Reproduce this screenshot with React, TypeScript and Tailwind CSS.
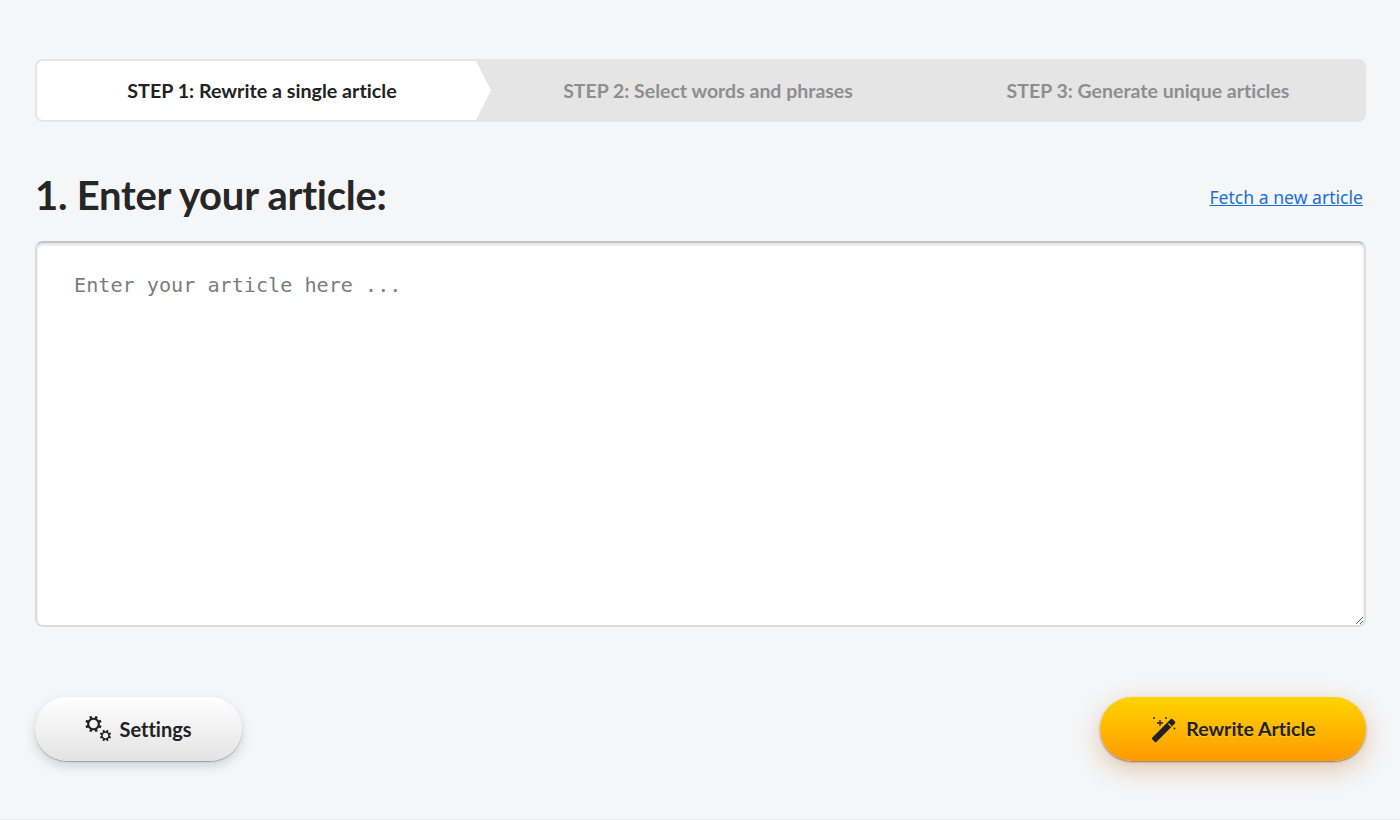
const display = "font-['Lato','Noto_Sans',sans-serif] [font-variant-ligatures:none]";

function Gear({ cx, cy, r, w }: { cx: number; cy: number; r: number; w: number }) {
  const teeth = [22.5, 67.5, 112.5, 157.5, 202.5, 247.5, 292.5, 337.5];
  return (
    <g>
      <circle cx={cx} cy={cy} r={r} fill="none" stroke="#222" strokeWidth={w} />
      {teeth.map((a) => (
        <line
          key={a}
          x1={cx + r * Math.cos((a * Math.PI) / 180)}
          y1={cy + r * Math.sin((a * Math.PI) / 180)}
          x2={cx + (r + w * 1.4) * Math.cos((a * Math.PI) / 180)}
          y2={cy + (r + w * 1.4) * Math.sin((a * Math.PI) / 180)}
          stroke="#222"
          strokeWidth={w * 1.2}
        />
      ))}
    </g>
  );
}

function CogsIcon() {
  return (
    <svg width="28" height="28" viewBox="0 0 28 28" className="shrink-0">
      <Gear cx={10.5} cy={9} r={5.3} w={2.1} />
      <Gear cx={22.5} cy={20.5} r={3.5} w={1.6} />
    </svg>
  );
}

function WandIcon() {
  return (
    <svg width="28" height="28" viewBox="0 0 28 28" className="shrink-0">
      <path d="M2.4 22.6 20.6 4.2a1.4 1.4 0 0 1 2 0l2.3 2.3a1.4 1.4 0 0 1 0 2L6.6 26.8a1.4 1.4 0 0 1-2 0l-2.2-2.2a1.4 1.4 0 0 1 0-2Z" fill="#222" />
      <path d="M18.4 8.6 21.3 11.5" stroke="#ffc400" strokeWidth="1.1" />
      <path d="M10 5v6M7 8h6" stroke="#222" strokeWidth="1.3" />
      <circle cx="4" cy="3" r="0.9" fill="#222" />
      <circle cx="16" cy="3" r="0.9" fill="#222" />
      <circle cx="24.5" cy="13.5" r="0.9" fill="#222" />
    </svg>
  );
}

export default function App() {
  return (
    <div className="h-[820px] w-[1400px] overflow-hidden border-b border-[#e9eaec] bg-[#f5f6f8] pl-[35px] pr-[34px] pt-[59px] font-['Noto_Sans',sans-serif]">
      <div className={`flex h-[63px] rounded-lg bg-[#e5e5e5] p-[2px] text-[19.5px] font-bold text-[#8e8e8e] ${display}`}>
        <div className="flex w-[454px] items-center justify-center rounded-l-md bg-white pr-[4px] text-[19.7px] text-[#222] [clip-path:polygon(0_0,439px_0,100%_50%,439px_100%,0_100%)]">
          STEP 1: Rewrite a single article
        </div>
        <div className="flex w-[434px] items-center justify-center">STEP 2: Select words and phrases</div>
        <div className="flex flex-1 items-center justify-center pl-[7px]">STEP 3: Generate unique articles</div>
      </div>

      <div className="mt-[46px] flex h-[53px] items-center justify-between">
        <h1 className={`text-[40px] font-bold leading-none tracking-[-0.25px] text-[#262626] ${display}`}>1. Enter your article:</h1>
        <a href="#" className="pr-[3px] pt-[6px] text-[17.6px] text-[#1a6fd6] underline">Fetch a new article</a>
      </div>

      <textarea
        placeholder="Enter your article here ..."
        className="mt-[20px] block h-[386px] w-full rounded-lg border-2 border-[#dcdcdc] border-t-[#c4c4c4] bg-white px-[37px] py-[27px] font-['DejaVu_Sans_Mono',monospace] text-[20.15px] text-[#333] shadow-[inset_0_2px_3px_rgba(0,0,0,0.12)] outline-none placeholder:text-[#7c7c7c]"
      />

      <div className="mt-[70px] flex items-start justify-between">
        <button className={`flex h-[64px] w-[207px] items-center justify-center gap-[8px] rounded-full bg-gradient-to-b from-white to-[#e3e3e3] pr-[2px] text-[20px] font-bold text-[#222] shadow-[0_1px_1px_rgba(0,0,0,0.28),0_5px_12px_rgba(0,0,0,0.15)] ${display}`}>
          <CogsIcon />
          Settings
        </button>
        <button className={`flex h-[64px] w-[266px] items-center justify-center gap-[8px] rounded-full bg-gradient-to-b from-[#ffd400] to-[#ff9a00] text-[19.5px] font-bold text-[#222] shadow-[0_1px_2px_rgba(70,50,60,0.6),0_8px_24px_rgba(190,110,30,0.36)] [text-shadow:0_1px_0_rgba(255,255,255,0.25)] ${display}`}>
          <WandIcon />
          Rewrite Article
        </button>
      </div>
    </div>
  );
}
